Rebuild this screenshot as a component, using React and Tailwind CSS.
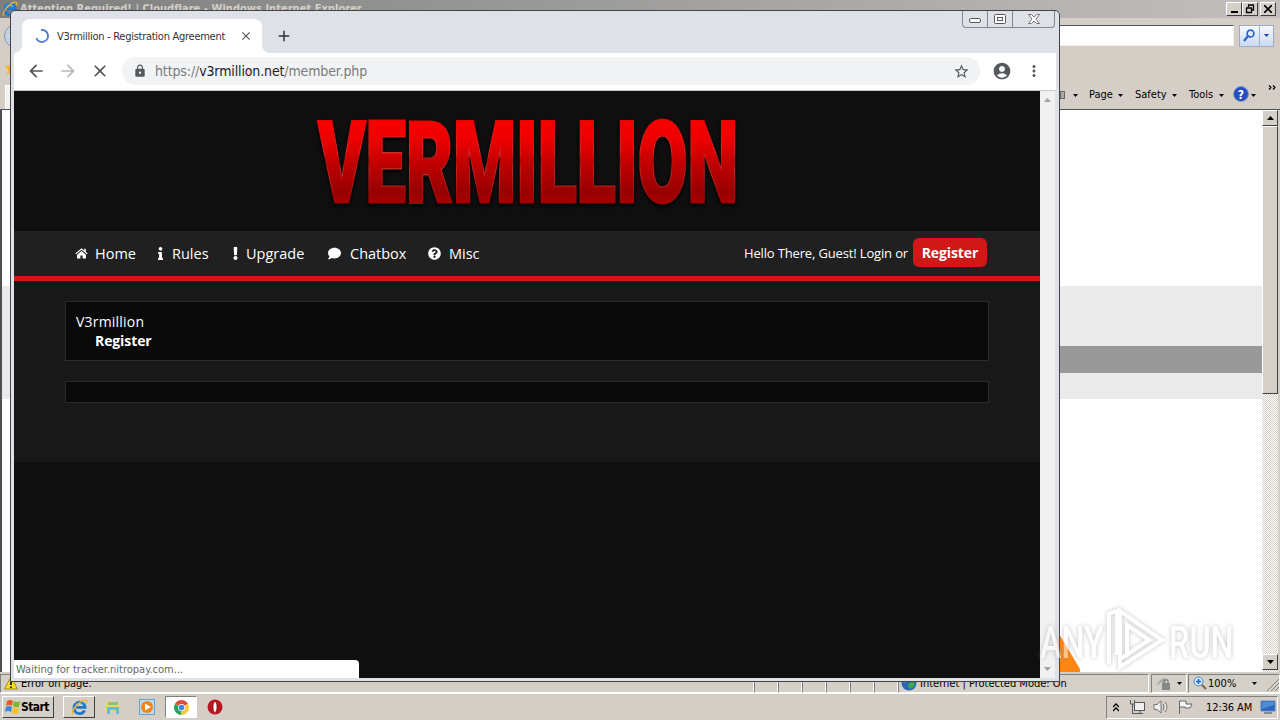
import {
  FaInfo,
  FaExclamation,
  FaComment,
  FaQuestionCircle,
} from "react-icons/fa";
import {
  MdArrowBack,
  MdArrowForward,
  MdClose,
  MdLock,
  MdStarBorder,
  MdAccountCircle,
  MdMoreVert,
  MdAdd,
} from "react-icons/md";

const HomeIcon = ({ className }) => (
  <svg viewBox="0 0 14 14" className={className} fill="currentColor">
    <path d="M7 4.3L2.2 8.3V12.4H5.8V9.2H8.2V12.4H11.8V8.3Z" />
    <path d="M7 1.3L.3 6.9L1.1 7.8L7 2.9L12.9 7.8L13.7 6.9L11.6 5.1V1.9H9.9V3.7Z" />
  </svg>
);

const navItems = [
  { label: "Home", icon: HomeIcon, width: "w-[79px]", gap: "w-5" },
  { label: "Rules", icon: FaInfo, width: "w-[75px]", gap: "w-[18px]" },
  { label: "Upgrade", icon: FaExclamation, width: "w-[99px]", gap: "w-[17px]" },
  { label: "Chatbox", icon: FaComment, width: "w-[100px]", gap: "w-[22px]" },
  { label: "Misc", icon: FaQuestionCircle, width: "w-[60px]", gap: "w-[21px]" },
];

const raised =
  "border border-t-white border-l-white border-r-[#404040] border-b-[#404040] bg-[#d4d0c8]";
const sunken =
  "border border-t-[#808080] border-l-[#808080] border-r-white border-b-white";

const Caret = ({ up }) => (
  <svg width="7" height="4" viewBox="0 0 7 4" className="shrink-0">
    <path d={up ? "M0 4L3.5 0L7 4Z" : "M0 0H7L3.5 4Z"} fill="currentColor" />
  </svg>
);

const MenuCaret = () => (
  <svg width="5" height="3" viewBox="0 0 5 3" className="shrink-0">
    <path d="M0 0H5L2.5 3Z" fill="currentColor" />
  </svg>
);

const IeLogo = ({ size }) => (
  <svg width={size} height={size} viewBox="0 0 18 18" className="shrink-0">
    <path
      d="M14.5 12A6 6 0 1 1 15 8.8H5.5"
      fill="none"
      stroke="#1d78ce"
      strokeWidth="3"
    />
    <path d="M5 6.5A5.4 5.4 0 0 1 12.5 6.2" fill="none" stroke="#63c5f5" strokeWidth="1.3" />
    <path
      d="M2 16.5C-1 13 8 3 13.5 1.5C17 .5 17.5 2.5 16 5"
      fill="none"
      stroke="#f0b52a"
      strokeWidth="1.5"
    />
  </svg>
);

const WindowsFlag = () => (
  <svg width="16" height="16" viewBox="0 0 16 16" className="shrink-0">
    <path d="M2 2Q5 0 8 2L7 7Q4 5 1 7Z" fill="#e75b25" />
    <path d="M9 2Q12 4 15 2L14 8Q11 9 8 7Z" fill="#78b82a" />
    <path d="M1 8Q4 6 7 8L6 13Q3 11 0 13Z" fill="#3a88d8" />
    <path d="M8 8Q11 10 14 9L13 14Q10 16 7 14Z" fill="#f6c026" />
  </svg>
);

const Globe = () => (
  <svg width="16" height="16" viewBox="0 0 16 16" className="shrink-0">
    <circle cx="8" cy="8" r="7.5" fill="#2868b8" />
    <path d="M3 3Q7 0 9 3L7 6L3 8L1 6ZM8 8L13 7L14 10L10 14L7 12Z" fill="#41a84c" />
    <path d="M9 2L13 4L12 6L9 5Z" fill="#85cfe8" />
  </svg>
);

const Logo = () => (
  <svg width="1026" height="140" viewBox="14 91 1026 140" className="block">
    <defs>
      <linearGradient id="red" gradientUnits="userSpaceOnUse" x1="0" y1="119" x2="0" y2="204">
        <stop offset="0" stopColor="#f90000" />
        <stop offset="0.25" stopColor="#ed0000" />
        <stop offset="0.55" stopColor="#bd0000" />
        <stop offset="0.85" stopColor="#980000" />
        <stop offset="1" stopColor="#a80000" />
      </linearGradient>
      <linearGradient id="rim" gradientUnits="userSpaceOnUse" x1="0" y1="119" x2="0" y2="204">
        <stop offset="0" stopColor="#e80000" />
        <stop offset="0.4" stopColor="#d02c2c" />
        <stop offset="0.48" stopColor="#a01010" />
        <stop offset="0.6" stopColor="#bc2c2c" />
        <stop offset="1" stopColor="#a00000" />
      </linearGradient>
    </defs>
    <text
      x="318"
      y="202"
      textLength="420"
      lengthAdjust="spacingAndGlyphs"
      fontFamily="Roboto, sans-serif"
      fontWeight="900"
      fontSize="114"
      fill="url(#red)"
      stroke="url(#rim)"
      strokeWidth="3"
      paintOrder="stroke"
      className="drop-shadow-[0_2px_2px_#000]"
    >
      VERMILLION
    </text>
  </svg>
);

const ExplorerWindow = () => (
  <div className="absolute inset-x-0 top-0 flex h-[694px] flex-col bg-[#d5cec7]">
    <div className="flex h-[18px] shrink-0 items-center bg-linear-to-r from-[#7e7e7e] to-[#c2c0be] pr-1 pl-[2px]">
      <IeLogo size={16} />
      <span className="ml-[2px] text-[11px] font-bold tracking-[0.03px] whitespace-nowrap text-[#d4d0c8]">
        Attention Required! | Cloudflare - Windows Internet Explorer
      </span>
      <div className="ml-auto flex text-black">
        <span className={`flex h-[14px] w-4 items-end justify-center pb-[2px] ${raised}`}>
          <i className="h-[2px] w-[7px] bg-black" />
        </span>
        <span className={`flex h-[14px] w-4 items-center justify-center ${raised}`}>
          <svg width="10" height="10" viewBox="0 0 10 10" fill="none" stroke="#000">
            <path d="M3 1H9M3.5 1V3M8.5 1V6H7M1 4H7M1.5 4V8.5H6.5V4" strokeWidth="1.3" />
          </svg>
        </span>
        <span className={`ml-[2px] flex h-[14px] w-4 items-center justify-center ${raised}`}>
          <svg width="8" height="8" viewBox="0 0 8 8" stroke="#000" strokeWidth="1.6">
            <path d="M0 0L8 8M8 0L0 8" />
          </svg>
        </span>
      </div>
    </div>
    <div className="flex h-[35px] shrink-0 items-center pl-[3px]">
      <svg width="26" height="26" viewBox="0 0 26 26">
        <circle cx="13" cy="13" r="11.5" fill="#c4d0e4" stroke="#8894a8" />
        <path d="M14 7L8 13L14 19" fill="none" stroke="#fff" strokeWidth="3" />
      </svg>
      <div className="mr-px ml-auto h-[21px] w-[190px] border-y border-r border-t-[#555] border-r-[#eee] border-b-[#eee] bg-white" />
      <div className="ml-[4px] flex h-[22px] w-[35px] border border-[#9eacc4] bg-linear-to-b from-[#f6f9fe] to-[#cbdaf0]">
        <span className="flex w-5 items-center justify-center border-r border-[#9eb4d4]">
          <svg width="13" height="13" viewBox="0 0 13 13" fill="none" stroke="#2866d0">
            <circle cx="7.5" cy="4.5" r="3.4" strokeWidth="1.7" />
            <path d="M5 7L1 12" strokeWidth="2.3" />
          </svg>
        </span>
        <span className="flex flex-1 items-center justify-center text-[#1747a2]">
          <MenuCaret />
        </span>
      </div>
      <div className="w-[6px]" />
    </div>
    <div className="flex h-[30px] shrink-0 items-center pl-1">
      <svg width="14" height="14" viewBox="0 0 14 14">
        <path d="M7 0L9 5H14L10 8L11 14L7 10L3 14L4 8L0 5H5Z" fill="#f3b51d" />
      </svg>
    </div>
    <div className="flex h-[26px] shrink-0 items-start justify-end pt-[2px] text-[11px] text-black">
      <div className="mr-auto ml-[5px] h-[25px] w-3 border-t border-l border-white bg-[#f4f2ee]" />
      <div className="flex h-[20px] items-center">
        <span className="h-2 w-[5px] border border-[#666] bg-[#aaa]" />
        <span className="ml-2"><MenuCaret /></span>
        <span className="ml-[11px] w-[25px]">Page</span>
        <span className="ml-[4px]"><MenuCaret /></span>
        <span className="ml-[12px] w-[33px]">Safety</span>
        <span className="ml-[4px]"><MenuCaret /></span>
        <span className="ml-[12px] w-[26px]">Tools</span>
        <span className="ml-[4px]"><MenuCaret /></span>
        <svg width="16" height="16" viewBox="0 0 16 16" className="mb-[2px] ml-[9px]">
          <circle cx="8" cy="8" r="7.5" fill="#244fc0" stroke="#8c9bbb" />
          <text x="8" y="12.5" textAnchor="middle" fill="#fff" fontSize="12" fontWeight="bold">?</text>
        </svg>
        <span className="ml-[2px]"><MenuCaret /></span>
      </div>
      <svg width="8" height="5" viewBox="0 0 8 5" className="mr-1 ml-[12px]" fill="none" stroke="#000" strokeWidth="1.2">
        <path d="M1 .5L3 2.5L1 4.5M5 .5L7 2.5L5 4.5" />
      </svg>
    </div>
    <div className="flex h-[563px] shrink-0 border-t border-l-2 border-[#505050] bg-white">
      <div className="flex flex-1 flex-col">
        <div className="h-[176px]" />
        <div className="h-[60px] bg-[#eaeaea]" />
        <div className="h-[27px] border-l-9 border-[#eaeaea] bg-[#999]" />
        <div className="h-[26px] bg-[#eaeaea]" />
        <svg width="60" height="40" viewBox="0 0 60 40" className="mt-auto ml-[1018px]">
          <path d="M30 0H38L60 37V40H0Z" fill="#fb8712" />
        </svg>
      </div>
      <div className="flex w-4 flex-col bg-[repeating-conic-gradient(#fff_0_25%,#d4d0c8_0_50%)] bg-size-[2px_2px]">
        <div className={`flex h-4 items-center justify-center ${raised}`}>
          <Caret up />
        </div>
        <div className={`h-[268px] ${raised}`} />
        <div className={`mt-auto mb-[2px] flex h-4 items-center justify-center ${raised}`}>
          <Caret />
        </div>
      </div>
      <div className="w-[2px] bg-[#d5cec7]" />
    </div>
    <div className="flex h-[22px] shrink-0 items-center bg-[#d4d0c8] text-[11px] text-black">
      <div className={`flex h-[19px] w-[754px] items-center ${sunken}`}>
        <svg width="14" height="14" viewBox="0 0 14 14" className="ml-[3px]">
          <path d="M7 .5L13.5 13H.5Z" fill="#f8df20" stroke="#97891d" />
          <path d="M7 4V9M7 10.5V12" stroke="#000" strokeWidth="1.6" />
        </svg>
        <span className="mt-[2px] ml-[3px]">Error on page.</span>
      </div>
      {[0, 1, 2, 3, 4, 5].map((n) => (
        <div key={n} className={`h-[19px] w-6 ${sunken}`} />
      ))}
      <div className={`flex h-[19px] w-[251px] items-center pl-[2px] ${sunken}`}>
        <Globe />
        <span className="mt-[2px] ml-[3px] whitespace-nowrap">Internet | Protected Mode: On</span>
      </div>
      <div className={`ml-[2px] flex h-[19px] w-[36px] items-center gap-[5px] pl-1 ${sunken}`}>
        <svg width="16" height="15" viewBox="0 0 16 15">
          <path d="M1 8Q6 0 11 3L9 7Q5 5 2 9" fill="#aaa" />
          <rect x="6" y="7" width="8" height="7" fill="#888" />
          <path d="M8 7V4H12V7" fill="none" stroke="#777" />
        </svg>
        <MenuCaret />
      </div>
      <div className={`ml-[1px] flex h-[19px] flex-1 items-center pl-[4px] ${sunken}`}>
        <svg width="14" height="14" viewBox="0 0 14 14">
          <circle cx="5.5" cy="5.5" r="4.5" fill="#d8eafa" stroke="#4983c7" />
          <path d="M3 5.5H8M5.5 3V8" stroke="#1668cc" strokeWidth="1.6" />
          <path d="M9 9L13 13" stroke="#80673c" strokeWidth="2" />
        </svg>
        <span className="mt-[2px] ml-px w-[29px]">100%</span>
        <span className="ml-[15px]"><MenuCaret /></span>
        <svg width="12" height="12" viewBox="0 0 12 12" className="mt-1 ml-auto" stroke="#858078">
          <path d="M0 12L12 0M4 12L12 4M8 12L12 8" />
        </svg>
      </div>
    </div>
  </div>
);

const BrowserWindow = () => (
  <div className="absolute top-[10px] left-[10px] flex h-[672px] w-[1050px] flex-col rounded-t-[5px] border border-[#434448] bg-[#dee1e6] px-[3px]">
    <div className="flex h-[42px] shrink-0 items-end">
      <svg width="8" height="8" viewBox="0 0 8 8">
        <path d="M0 8A8 8 0 0 0 8 0V8Z" fill="#fff" />
      </svg>
      <div className="flex h-[34px] w-60 items-center rounded-t-lg bg-white pl-[13px]">
        <svg width="14" height="14" viewBox="0 0 14 14" fill="none" stroke="#4b7fd8" strokeWidth="2">
          <path d="M6 1A6 6 0 1 1 1.4 9.2" />
        </svg>
        <span className="mt-[2px] ml-2 w-[168px] text-[11px] tracking-[-0.27px] whitespace-nowrap text-[#303238]">
          V3rmillion - Registration Agreement
        </span>
        <MdClose className="ml-[14px] size-[14px] text-[#53565b]" stroke="currentColor" />
      </div>
      <svg width="8" height="8" viewBox="0 0 8 8">
        <path d="M8 8A8 8 0 0 1 0 0V8Z" fill="#fff" />
      </svg>
      <MdAdd className="mb-2 ml-[5px] size-[18px] text-[#303238]" stroke="currentColor" />
      <div className="mr-[1px] ml-auto flex h-[17px] w-[93px] self-start rounded-b-[4px] border border-t-0 border-[#85878d]">
        <span className="flex w-[25px] items-center justify-center border-r border-[#85878d]">
          <i className="mt-[3px] h-[5px] w-3 rounded-xs border border-[#55575b] bg-white" />
        </span>
        <span className="flex w-[25px] items-center justify-center border-r border-[#85878d]">
          <svg width="12" height="10" viewBox="0 0 12 10" fill="#fff" stroke="#55575b">
            <rect x=".5" y=".5" width="11" height="9" rx="1" />
            <rect x="3.5" y="3.5" width="5" height="3" />
          </svg>
        </span>
        <span className="flex flex-1 items-center justify-center">
          <svg width="12" height="10" viewBox="0 0 12 10" fill="#fff" stroke="#66686c" strokeWidth=".9">
            <path d="M.5 .5H3.5L6 3L8.5 .5H11.5L8 5L11.5 9.5H8.5L6 7L3.5 9.5H.5L4 5Z" />
          </svg>
        </span>
      </div>
    </div>
    <div className="flex h-[38px] shrink-0 items-center border-b border-[#c6c7c9] bg-white pb-px">
      <MdArrowBack className="ml-3 size-5 text-[#535558]" />
      <MdArrowForward className="ml-3 size-5 text-[#b7b8ba]" />
      <MdClose className="ml-3 size-5 text-[#535558]" />
      <div className="ml-3 flex h-7 w-[858px] items-center rounded-full bg-[#f1f3f4] pr-[10px] pl-[11px]">
        <MdLock className="size-[14px] text-[#55585c]" />
        <span className="ml-2 text-[14px] tracking-[-0.13px] text-[#777a7f]">
          https://<span className="text-[#202124]">v3rmillion.net</span>/member.php
        </span>
        <MdStarBorder className="ml-auto size-[17px] text-[#55585c]" />
      </div>
      <MdAccountCircle className="ml-3 size-5 text-[#55585c]" />
      <MdMoreVert className="ml-[13px] size-[18px] text-[#55585c]" />
    </div>
    <div className="flex h-[587px] shrink-0">
      <div className="flex w-[1026px] flex-col bg-[#0f0f0f] font-['Open_Sans',sans-serif] text-white">
        <Logo />
        <div className="flex h-[50px] shrink-0 items-center border-b-5 border-[#d01819] bg-[#202020] pl-[61px]">
          {navItems.map(({ label, icon: Icon, width, gap }) => (
            <a key={label} className={`flex shrink-0 items-center text-[14.5px] ${width}`}>
              <span className={`shrink-0 ${gap}`}>
                <Icon className="size-[13px]" />
              </span>
              {label}
            </a>
          ))}
          <span className="mr-[5px] ml-auto text-[13px] tracking-[-0.15px]">
            Hello There, Guest! Login or
          </span>
          <a className="mr-[53px] mb-[2px] flex h-[29px] w-[74px] items-center justify-center rounded-md bg-[#d01819] text-[14px] font-bold tracking-[-0.1px]">
            Register
          </a>
        </div>
        <div className="flex h-[181px] shrink-0 flex-col gap-5 bg-[#181818] pt-5 pr-[51px] pl-[51px]">
          <div className="h-[60px] border border-[#2b2b2b] bg-[#090909] pt-[10px] pl-[10px] text-[14px] leading-[19px]">
            <div className="tracking-[0.2px]">V3rmillion</div>
            <div className="pl-[19px] font-bold tracking-[-0.1px]">Register</div>
          </div>
          <div className="h-[22px] border border-[#2b2b2b] bg-[#090909]" />
        </div>
        <div className="mt-auto flex h-[18px] w-[345px] items-center rounded-tr bg-white pt-[2px] pl-[2px] font-['DejaVu_Sans_Condensed','DejaVu_Sans',sans-serif] text-[11px] text-[#66686c]">
          Waiting for tracker.nitropay.com...
        </div>
      </div>
      <div className="flex w-[15px] flex-col items-center justify-between bg-[#f1f1f1] py-[7px] text-[#a3a3a3]">
        <Caret up />
        <Caret />
      </div>
    </div>
  </div>
);

const Taskbar = () => (
  <div className="absolute inset-x-0 bottom-0 flex h-[27px] items-center border-t border-white bg-[#d5cec7] pl-[2px] text-[11px] text-black">
    <div className={`flex h-[22px] w-[52px] items-center pl-[2px] text-[12px] font-bold tracking-[-0.6px] ${raised}`}>
      <WindowsFlag />
      Start
    </div>
    <div className={`ml-[9px] flex h-[22px] w-8 items-center justify-center ${raised}`}>
      <IeLogo size={17} />
    </div>
    <svg width="16" height="16" viewBox="0 0 16 16" className="ml-[10px]">
      <path d="M1 2H6L7 4H15V13H1Z" fill="#ecd377" />
      <path d="M3 3H13V6H3Z" fill="#8bc477" />
      <path d="M2 8H14V15H11V11H5V15H2Z" fill="#69b9e5" />
    </svg>
    <svg width="16" height="16" viewBox="0 0 16 16" className="ml-[18px]">
      <rect x=".5" y=".5" width="15" height="15" fill="#b9dbf5" stroke="#65a3d4" />
      <circle cx="8" cy="8" r="6" fill="#ee8519" />
      <path d="M6 4.5L12 8L6 11.5Z" fill="#fff" />
    </svg>
    <div className={`ml-[10px] flex h-[22px] w-8 items-center justify-center bg-white ${sunken}`}>
      <svg width="15" height="15" viewBox="0 0 16 16">
        <path d="M8 8L1.1 4A8 8 0 0 1 14.9 4Z" fill="#dd4b3e" />
        <path d="M8 8L1.1 4A8 8 0 0 0 8 16Z" fill="#27a55a" />
        <path d="M8 8L14.9 4A8 8 0 0 1 8 16Z" fill="#f8cb38" />
        <circle cx="8" cy="8" r="3.8" fill="#fff" />
        <circle cx="8" cy="8" r="3" fill="#4285dc" />
      </svg>
    </div>
    <svg width="16" height="16" viewBox="0 0 16 16" className="ml-[10px]">
      <circle cx="8" cy="8" r="7.5" fill="#b91620" />
      <ellipse cx="8" cy="8" rx="2" ry="5.5" fill="#fff" stroke="#6d0a10" strokeWidth=".7" />
    </svg>
    <div className={`mr-[2px] ml-auto flex h-[23px] w-[172px] items-center ${sunken}`}>
      <svg width="6" height="9" viewBox="0 0 6 9" className="ml-[6px]" fill="none" stroke="#000" strokeWidth="1.3">
        <path d="M0 4L3 1L6 4M0 8L3 5L6 8" />
      </svg>
      <svg width="17" height="16" viewBox="0 0 17 16" className="ml-[10px]" fill="#eee" stroke="#55575a">
        <rect x="5.5" y="3.5" width="10" height="8" />
        <path d="M1.5 1V5H5.5V1M3.5 5V14.5H14M11 12V14" fill="none" />
      </svg>
      <svg width="17" height="16" viewBox="0 0 17 16" className="ml-[7px]" fill="#eee" stroke="#777">
        <path d="M1 5.5H4L8 2V14L4 10.5H1ZM10 5Q12 8 10 11M12 3Q16 8 12 13" />
      </svg>
      <svg width="17" height="16" viewBox="0 0 17 16" className="ml-[7px]" fill="#f5f5f5" stroke="#666">
        <path d="M2.5 15V2H9V5H15L13 9H8V8H3" />
      </svg>
      <span className="mt-[2px] ml-[12px] w-[46px] tracking-[-0.1px] whitespace-nowrap">12:36 AM</span>
      <svg width="16" height="15" viewBox="0 0 16 15" className="ml-2">
        <path d="M1 1H15V11H1Z" fill="#2c65bd" stroke="#5688c6" />
        <path d="M2 2H14V5L2 9Z" fill="#508cd5" />
        <path d="M4 13H12" stroke="#344a66" />
      </svg>
    </div>
  </div>
);

const Watermark = () => (
  <svg
    width="220"
    height="70"
    viewBox="0 0 220 70"
    className="absolute top-[606px] left-[1036px] overflow-visible opacity-50 drop-shadow-[0_0_2px_#888]"
    fontFamily="Roboto, sans-serif"
    fontSize="45"
    fontWeight="500"
    fill="#fff"
  >
    <text transform="translate(4 52) scale(.72 1)">ANY</text>
    <text transform="translate(133 52) scale(.72 1)">RUN</text>
    <path
      d="M73 58V8L81 5V49M84 52V5L126 34L84 61V53L113 34L91 19V49L103 40"
      fill="none"
      stroke="#fff"
      strokeWidth="4"
    />
  </svg>
);

const App = () => {
  return (
    <div className="relative h-[720px] w-[1280px] overflow-hidden bg-[#d5cec7] font-['DejaVu_Sans_Condensed','DejaVu_Sans',sans-serif]">
      <ExplorerWindow />
      <BrowserWindow />
      <Taskbar />
      <Watermark />
    </div>
  );
};

export default App;
